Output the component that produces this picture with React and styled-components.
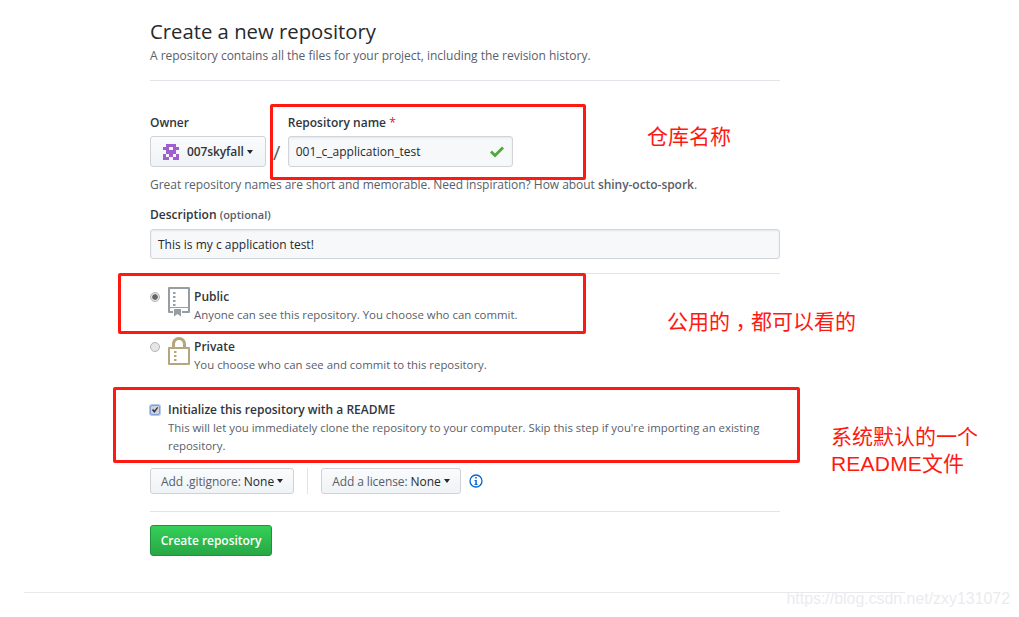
import React from 'react';
import styled, { createGlobalStyle } from 'styled-components';

const GlobalStyle = createGlobalStyle`
  html, body {
    margin: 0;
    background: #fff;
    overflow: hidden;
  }

  body {
    font-family: "Open Sans", "Noto Sans", sans-serif;
    font-size: 12px;
    color: #24292e;
  }
`;

const Page = styled.div`
  position: relative;
  width: 1019px;
  height: 617px;
  overflow: hidden;
`;

const Main = styled.main`
  width: 630px;
  margin-left: 150px;
  padding-top: 17px;
`;

const Title = styled.h1`
  margin: 0;
  font-size: 20.3px;
  line-height: 28px;
  font-weight: 400;
`;

const Subtitle = styled.p`
  margin: 2px 0 0;
  height: 33px;
  line-height: 18px;
  letter-spacing: -0.02px;
  color: #586069;
  border-bottom: 1px solid #e1e4e8;
`;

const OwnerRow = styled.div`
  display: flex;
  align-items: flex-end;
  margin-top: 33px;
`;

const Field = styled.div`
  display: flex;
  flex-direction: column;
  gap: 4px;
`;

const Label = styled.label`
  font-weight: 600;
  line-height: 18px;
  color: #2f363d;
`;

const Required = styled.span`
  color: #cb2431;
  font-weight: 400;
`;

const Optional = styled.span`
  color: #586069;
  font-size: 11px;
`;

const SelectButton = styled.div`
  display: flex;
  align-items: center;
  box-sizing: border-box;
  height: ${(p) => p.$height}px;
  padding: 0 ${(p) => p.$pad}px;
  border: 1px solid #cfd3d7;
  border-radius: 3px;
  background: linear-gradient(#fafbfc, #eff3f6);
  font-weight: 500;
  white-space: nowrap;
`;

const OwnerName = styled.span`
  font-weight: 600;
  letter-spacing: -0.1px;
  color: #2f363d;
`;

const Muted = styled.span`
  color: #586069;
  font-weight: 400;
  margin-right: 3px;
  letter-spacing: -0.1px;
`;

const Caret = styled.i`
  display: inline-block;
  margin-left: 3px;
  border-style: solid;
  border-width: 4px 3.5px 0;
  border-color: #24292e transparent transparent;
`;

const Slash = styled.span`
  width: 22px;
  height: 31px;
  line-height: 34px;
  text-align: center;
  font-size: 20px;
  color: #586069;
`;

const Input = styled.div`
  display: flex;
  align-items: center;
  justify-content: space-between;
  box-sizing: border-box;
  width: ${(p) => p.$width};
  height: ${(p) => p.$height}px;
  padding: 0 7px;
  border: 1px solid #d1d5da;
  border-radius: 3px;
  background: #f6f8fa;
  box-shadow: inset 0 1px 2px rgba(27, 31, 35, 0.075);
`;

const Note = styled.p`
  margin: 9px 0 0;
  line-height: 18px;
  letter-spacing: -0.04px;
  color: #586069;

  strong {
    font-weight: 600;
  }
`;

const DescriptionField = styled(Field)`
  margin-top: 12px;
  gap: 5px;
`;

const Rule = styled.hr`
  margin: ${(p) => p.$top}px 0 0;
  border: 0;
  border-top: 1px solid #e1e4e8;
`;

const Option = styled.div`
  display: flex;
  align-items: flex-start;
  margin-top: ${(p) => p.$top}px;
`;

const Radio = styled.span`
  flex: none;
  box-sizing: border-box;
  width: 10px;
  height: 10px;
  margin-top: 5px;
  margin-right: 8px;
  border: 1px solid #b4b4b4;
  border-radius: 50%;
  background: ${(p) => (p.$checked ? 'radial-gradient(circle, #666 0 2.4px, #e6e6e6 3.2px)' : '#e6e6e6')};
`;

const OptionIcon = styled.svg`
  flex: none;
  width: 22px;
  height: 30px;
  margin-right: 4px;
`;

const OptionText = styled.div`
  display: flex;
  flex-direction: column;
  padding-top: 1px;
`;

const OptionTitle = styled.span`
  font-weight: 600;
  line-height: 18px;
  color: #2f363d;
`;

const OptionHelp = styled.span`
  font-size: 11.4px;
  line-height: 18px;
  color: #586069;
`;

const CheckBox = styled.span`
  flex: none;
  display: flex;
  align-items: center;
  justify-content: center;
  box-sizing: border-box;
  width: 10px;
  height: 10px;
  margin: 5px 8px 0 0;
  border: 1px solid #7f9cdc;
  border-radius: 2px;
  background: #ced2da;
  box-shadow: 0 0 0 1px #b5c9ef;
`;

const ButtonRow = styled.div`
  display: flex;
  align-items: center;
  margin-top: 13px;
`;

const VerticalLine = styled.span`
  width: 1px;
  height: 26px;
  margin: 0 13px;
  background: #e1e4e8;
`;

const InfoIcon = styled.svg`
  width: 14px;
  height: 14px;
  margin-left: 8px;
`;

const CreateButton = styled.button`
  display: block;
  box-sizing: border-box;
  width: 122px;
  height: 31px;
  margin-top: 13px;
  padding: 0;
  border: 1px solid #23913c;
  border-radius: 3px;
  background: linear-gradient(#34d058, #28a745);
  color: #fff;
  font: 600 12px "Open Sans", "Noto Sans", sans-serif;
  letter-spacing: -0.03px;
`;

const FooterLine = styled.div`
  position: absolute;
  left: 24px;
  top: 592px;
  width: 881px;
  height: 1px;
  background: #e6e8eb;
`;

const Watermark = styled.span`
  position: absolute;
  right: 9px;
  top: 589px;
  font-family: "Liberation Sans", sans-serif;
  font-size: 15.9px;
  line-height: 20px;
  color: #ebebee;
`;

/* the red boxes and captions drawn over the screenshot */
const Callout = styled.div`
  position: absolute;
  box-sizing: border-box;
  left: ${(p) => p.$x}px;
  top: ${(p) => p.$y}px;
  width: ${(p) => p.$w}px;
  height: ${(p) => p.$h}px;
  border: 3px solid #fe1a12;
  border-radius: 2px;
`;

const Caption = styled.span`
  position: absolute;
  left: ${(p) => p.$x}px;
  top: ${(p) => p.$y}px;
  font-family: "Liberation Sans", "Noto Sans CJK SC", sans-serif;
  font-size: 21px;
  line-height: 27px;
  color: #fe1a12;
`;

const Latin = styled.span`
  letter-spacing: 0.2px;
`;

/* the TC comma is centred in its cell, as in the reference, but sits too high */
const Comma = styled.span`
  font-family: "Noto Sans CJK TC", sans-serif;
  line-height: 0;
  vertical-align: -6px;
`;

const AVATAR_CELLS = [
  '.XXX.',
  'XX.XX',
  '.XXX.',
  'X.X.X',
  'XX.XX',
];

const OwnerAvatar = () => (
  <svg width="16" height="16" viewBox="0 0 5 5" shapeRendering="crispEdges" style={{ marginRight: 8 }}>
    {AVATAR_CELLS.map((row, y) => row.split('').map((cell, x) => (
      cell === 'X' ? <rect key={`${x}-${y}`} x={x} y={y} width="1" height="1" fill="#a05fcf" /> : null
    )))}
  </svg>
);

const BookIcon = () => (
  <OptionIcon viewBox="0 0 22 30">
    <path
      fill="#959da5"
      fillRule="evenodd"
      d="M1 0h20a1 1 0 0 1 1 1v24a1 1 0 0 1-1 1h-7v-2h6v-3H2v3h3v2H1a1 1 0 0 1-1-1V1a1 1 0 0 1 1-1zM2 2v18h18V2z"
    />
    <path fill="#959da5" d="M6 22h7v7.500l-3.500-2.500L6 29.500z" />
    <path fill="#959da5" d="M5 5h2.500v2H5zM5 9h2.500v2H5zM5 13h2.500v2H5zM5 17h2.500v2H5z" />
  </OptionIcon>
);

const LockIcon = () => (
  <OptionIcon viewBox="0 0 22 30">
    <path
      fill="#b5a67e"
      fillRule="evenodd"
      d="M11 0c4 0 7 3 7 7v3h3a1 1 0 0 1 1 1v16a1 1 0 0 1-1 1H1a1 1 0 0 1-1-1V11a1 1 0 0 1 1-1h3V7c0-4 3-7 7-7zm0 3C8.500 3 7 5 7 7v3h8V7c0-2-1.500-4-4-4zM2 12v14h18V12z"
    />
    <path fill="#b5a67e" d="M6 14h2.500v2H6zM6 18h2.500v2H6zM6 22h2.500v2H6z" />
  </OptionIcon>
);

export default function App() {
  return (
    <Page>
      <GlobalStyle />
      <Main>
        <Title>Create a new repository</Title>
        <Subtitle>A repository contains all the files for your project, including the revision history.</Subtitle>

        <OwnerRow>
          <Field>
            <Label>Owner</Label>
            <SelectButton $height={31} $pad={12}>
              <OwnerAvatar />
              <OwnerName>007skyfall</OwnerName>
              <Caret />
            </SelectButton>
          </Field>
          <Slash>/</Slash>
          <Field>
            <Label>
              Repository name <Required>*</Required>
            </Label>
            <Input $width="225px" $height={31}>
              001_c_application_test
              <svg width="16" height="14" viewBox="0 0 16 14">
                <path fill="#4fa83d" d="M1 7.500 3 5.500 6 8.500 13 1.500 15 3.500 6 12.500z" />
              </svg>
            </Input>
          </Field>
        </OwnerRow>

        <Note>
          Great repository names are short and memorable. Need inspiration? How about <strong>shiny-octo-spork</strong>.
        </Note>

        <DescriptionField>
          <Label>
            Description <Optional>(optional)</Optional>
          </Label>
          <Input $width="100%" $height={30}>This is my c application test!</Input>
        </DescriptionField>

        <Rule $top={14} />

        <Option $top={13}>
          <Radio $checked />
          <BookIcon />
          <OptionText>
            <OptionTitle>Public</OptionTitle>
            <OptionHelp>Anyone can see this repository. You choose who can commit.</OptionHelp>
          </OptionText>
        </Option>

        <Option $top={13}>
          <Radio />
          <LockIcon />
          <OptionText>
            <OptionTitle>Private</OptionTitle>
            <OptionHelp>You choose who can see and commit to this repository.</OptionHelp>
          </OptionText>
        </Option>

        <Option $top={26}>
          <CheckBox>
            <svg width="8" height="8" viewBox="0 0 9 9">
              <path fill="#333" d="M1 4.500 2.500 3.500 3.700 5 7 1 8 2 3.800 8z" />
            </svg>
          </CheckBox>
          <OptionText>
            <OptionTitle>Initialize this repository with a README</OptionTitle>
            <OptionHelp>
              This will let you immediately clone the repository to your computer. Skip this step if you&apos;re importing an existing repository.
            </OptionHelp>
          </OptionText>
        </Option>

        <ButtonRow>
          <SelectButton $height={26} $pad={10}>
            <Muted>Add .gitignore:</Muted>None
            <Caret />
          </SelectButton>
          <VerticalLine />
          <SelectButton $height={26} $pad={10}>
            <Muted>Add a license:</Muted>None
            <Caret />
          </SelectButton>
          <InfoIcon viewBox="0 0 14 14">
            <circle cx="7" cy="7" r="6" fill="none" stroke="#0366d6" strokeWidth="1.300" />
            <path fill="#0366d6" d="M6.200 3h1.600v1.600H6.200zM5.500 6h2.300v4h.8v1H5.500v-1h.8V7h-.8z" />
          </InfoIcon>
        </ButtonRow>

        <Rule $top={17} />

        <CreateButton>Create repository</CreateButton>
      </Main>

      <FooterLine />
      <Watermark>https://blog.csdn.net/zxy131072</Watermark>

      <Callout $x={270} $y={104} $w={316} $h={76} />
      <Callout $x={118} $y={273} $w={468} $h={61} />
      <Callout $x={113} $y={387} $w={687} $h={76} />

      <Caption $x={647} $y={123}>仓库名称</Caption>
      <Caption $x={667} $y={308}>公用的<Comma>，</Comma>都可以看的</Caption>
      <Caption $x={831} $y={423}>系统默认的一个<br /><Latin>README</Latin>文件</Caption>
    </Page>
  );
}
